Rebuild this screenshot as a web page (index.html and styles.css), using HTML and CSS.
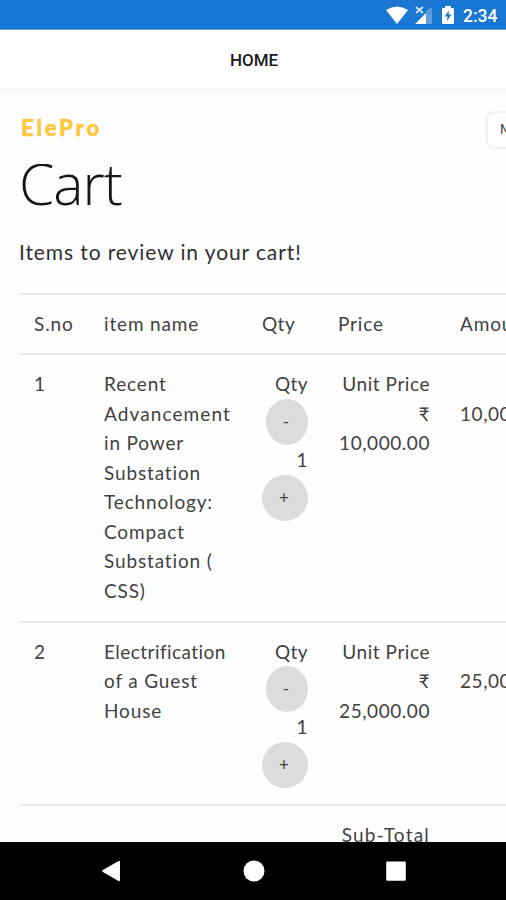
FILE: index.html
```html
<!DOCTYPE html>
<html lang="en">
<head>
<meta charset="utf-8">
<title>ElePro Cart</title>
<link rel="stylesheet" href="styles.css">
</head>
<body>
<div class="phone">
  <div class="status">
    <svg class="wifi" viewBox="0 0 22 18"><path d="M0 4Q11-3 22 4L11 18Z"/></svg>
    <svg class="signal" viewBox="0 0 18 18"><path class="faint" d="M11 5L17 1V18H11Z"/><path d="M11 7V18H0Z"/><path class="cross" d="M1 1L8 7M8 1L1 7"/></svg>
    <svg class="battery" viewBox="0 0 12 18"><path d="M3 2V0H9V2H11Q12 2 12 3V17Q12 18 11 18H1Q0 18 0 17V3Q0 2 1 2Z"/><path class="bolt" d="M7 4.500L2.500 10.500H5.500L5 15L9.500 8.500H6.500Z"/></svg>
    <span class="clock">2:34</span>
  </div>
  <header class="appbar"><span>HOME</span></header>
  <main class="page">
    <div class="brandrow"><span class="brand">ElePro</span><button class="menu">Menu</button></div>
    <h1>Cart</h1>
    <p class="intro">Items to review in your cart!</p>
    <div class="table">
      <div class="row head">
        <div>S.no</div><div>item name</div><div class="tight">Qty</div><div>Price</div><div>Amount</div>
      </div>
      <div class="row first">
        <div>1</div>
        <div>Recent<br><span class="adv">Advancement</span><br>in Power<br>Substation<br>Technology:<br>Compact<br>Substation (<br>CSS)</div>
        <div class="num qty"><span>Qty</span><button class="minus">-</button><span class="count">1</span><button class="plus">+</button></div>
        <div class="num">Unit Price<br>₹<br>10,000.00</div>
        <div class="amount">10,000.00</div>
      </div>
      <div class="row second">
        <div>2</div>
        <div><span class="tight">Electrification</span><br>of a Guest<br>House</div>
        <div class="num qty"><span>Qty</span><button class="minus">-</button><span class="count">1</span><button class="plus">+</button></div>
        <div class="num">Unit Price<br>₹<br>25,000.00</div>
        <div class="amount">25,000.00</div>
      </div>
      <div class="row total"><div></div><div></div><div></div><div class="num"><span class="sub">Sub-Total</span></div><div></div></div>
    </div>
  </main>
  <nav class="navbar">
    <svg viewBox="0 0 22 22"><path d="M2.500 10.300L18.500 1Q20 .500 20 2V20Q20 21.500 18.500 21L2.500 11.700Q1.500 11 2.500 10.300Z"/></svg>
    <svg viewBox="0 0 22 22"><circle cx="11" cy="11" r="10.500"/></svg>
    <svg viewBox="0 0 22 22"><rect x="1.200" y="1.400" width="19.600" height="19.400" rx="1"/></svg>
  </nav>
</div>
</body>
</html>
```
FILE: styles.css
```css
* { box-sizing: border-box; }
body { margin: 0; }
.phone {
  width: 506px;
  height: 900px;
  overflow: hidden;
  display: flex;
  flex-direction: column;
  background: #fefefe;
  color: #424242;
  font-family: Lato, "Noto Sans", sans-serif;
}
.status {
  flex: none;
  height: 30px;
  background: #1976d2;
  border-bottom: 1px solid #6da6e2;
  display: flex;
  align-items: center;
  justify-content: flex-end;
  padding-right: 9px;
}
.status svg { height: 18px; fill: #fff; }
.wifi { width: 22px; margin-right: 7px; }
.signal { width: 18px; margin-right: 9px; }
.battery { width: 12px; margin-right: 9px; }
.signal .faint { fill: #5c9fe0; }
.signal .cross { fill: none; stroke: #d5e6f8; stroke-width: 1.7; }
.battery .bolt { fill: #1976d2; }
.clock {
  width: 34px;
  color: #fff;
  font: 500 17.5px/30px Roboto, sans-serif;
  white-space: nowrap;
  padding-top: 2px;
}
.appbar {
  flex: none;
  height: 64px;
  background: #fff;
  border-bottom: 6px solid #fafafa;
  text-align: center;
  font: 500 17px/60px Roboto, sans-serif;
  color: #1b1b1b;
  padding-left: 2px;
}
.page { flex: 1; min-height: 0; overflow: hidden; padding-left: 19px; }
.brandrow {
  display: flex;
  justify-content: space-between;
  height: 59px;
  padding-top: 17px;
}
.brand {
  color: #fdc840;
  -webkit-text-stroke: .5px #fdc840;
  font-size: 22px;
  font-weight: 900;
  line-height: 34px;
  letter-spacing: 2.8px;
  padding-left: 2px;
}
.menu {
  flex: none;
  width: 76px;
  height: 38px;
  margin-right: -56px;
  border: 2px solid #f1f1f1;
  border-radius: 7px;
  background: #fff;
  color: #333;
  font: 13px/30px Lato, sans-serif;
  text-align: left;
  padding: 0 0 2px 12px;
}
h1 {
  margin: 0;
  font: 300 57px/60px "Open Sans", sans-serif;
  letter-spacing: -1px;
  color: #171717;
  height: 81px;
  clip-path: inset(11px 0 0 0);
}
.intro {
  margin: 0;
  font-size: 21px;
  line-height: 36px;
  height: 59px;
  letter-spacing: .9px;
  color: #303030;
}
.table { width: 560px; font-size: 19px; line-height: 29.55px; letter-spacing: .85px; }
.row {
  display: grid;
  grid-template-columns: 70px 158px 76px 122px 134px;
  border-top: 2px solid #e9ebeb;
}
.row > div { padding: 14px 15px 0; white-space: nowrap; }
.head { height: 60px; }
.first { height: 267.5px; }
.second { height: 183px; }
.adv { letter-spacing: 1.1px; }
.tight { letter-spacing: .45px; }
.row > .num { text-align: right; letter-spacing: .55px; }
.num .sub { letter-spacing: 1.2px; }
.row > .qty { display: flex; flex-direction: column; align-items: flex-end; letter-spacing: .4px; }
.qty button {
  flex: none;
  height: 46px;
  border: 0;
  border-radius: 50%;
  background: #dcdcdc;
  color: #444;
  font: 17px/46px Lato, sans-serif;
  padding: 0 2px 2px 0;
}
.minus { width: 42px; }
.plus { width: 46px; }
.count { line-height: 30px; }
.row > .amount { padding-top: 43.5px; letter-spacing: .55px; }
.navbar {
  flex: none;
  height: 58px;
  background: #000;
  display: flex;
  justify-content: space-between;
  align-items: center;
  padding: 0 99px 0 100px;
}
.navbar svg { width: 22px; height: 22px; fill: #fff; }
```
